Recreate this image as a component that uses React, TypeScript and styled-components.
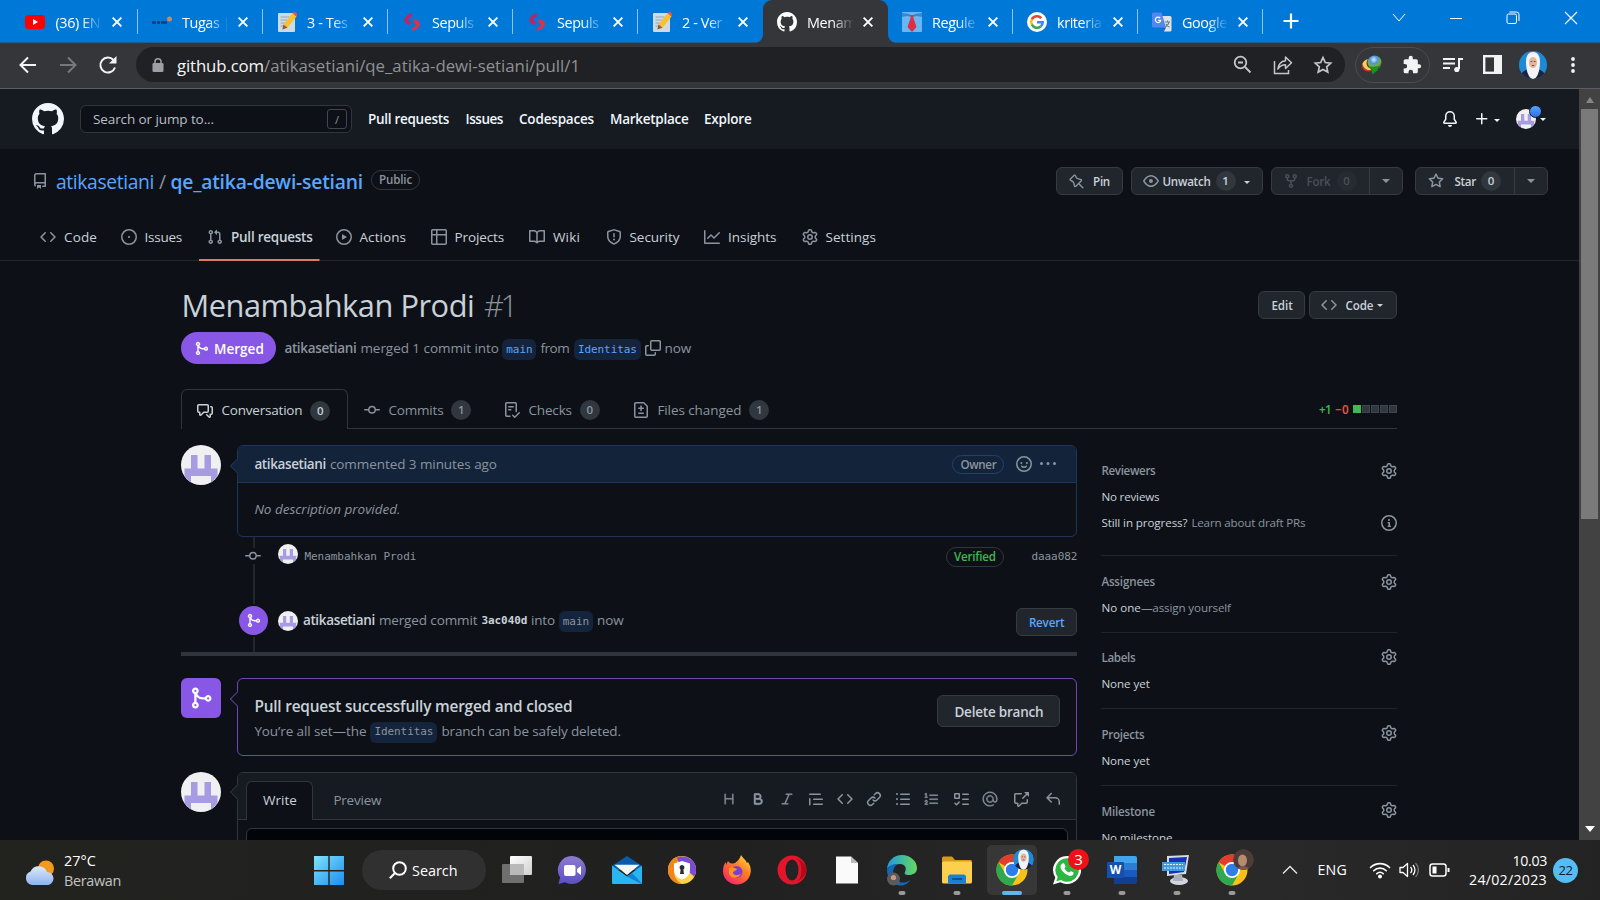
import React, { useLayoutEffect, useRef, useState } from "react";
import styled, { createGlobalStyle, css } from "styled-components";
import { GoHeading, GoBold, GoItalic, GoMention, GoListOrdered } from "react-icons/go";

const GlobalStyle = createGlobalStyle`
  html, body { margin: 0; padding: 0; background: #0d1117; overflow: hidden; }
  * { box-sizing: border-box; }
  body { font-family: "Open Sans", "Noto Sans", sans-serif; }
  svg { display: block; flex: none; }
`;

const c = {
  page: "#0d1117",
  header: "#161b22",
  text: "#c9d1d9",
  muted: "#8b949e",
  border: "#30363d",
  soft: "#21262d",
  link: "#58a6ff",
  purple: "#8957e5",
};

/* ---------- text that is tracked to fill a given width ---------- */

const TextBox = styled.span<{ $w: number; $size: number; $weight: number; $color: string; $ml: number; $drop: number; $mono?: boolean; $italic?: boolean }>`
  flex: none;
  display: inline-block;
  width: ${(p) => p.$w}px;
  margin-left: ${(p) => p.$ml}px;
  padding-top: ${(p) => p.$drop * 2}px;
  font-size: ${(p) => p.$size}px;
  font-weight: ${(p) => p.$weight};
  font-style: ${(p) => (p.$italic ? "italic" : "normal")};
  color: ${(p) => p.$color};
  line-height: 1.3;
  white-space: pre;
  ${(p) => p.$mono && css`font-family: "DejaVu Sans Mono", monospace;`}
`;

type FitProps = {
  w: number;
  size?: number;
  weight?: number;
  color?: string;
  ml?: number;
  drop?: number;
  mono?: boolean;
  italic?: boolean;
  children: string;
};

function Fit({ w, size = 13.5, weight = 400, color = c.text, ml = 0, drop = 1, mono, italic, children }: FitProps) {
  const ref = useRef<HTMLSpanElement>(null);
  const [spacing, setSpacing] = useState<number | null>(null);
  useLayoutEffect(() => {
    if (spacing === null && ref.current) {
      const natural = ref.current.getBoundingClientRect().width;
      setSpacing((w - natural) / children.length);
    }
  }, [spacing, w, children]);
  return (
    <TextBox $w={w} $size={size} $weight={weight} $color={color} $ml={ml} $drop={drop} $mono={mono} $italic={italic}>
      <span ref={ref} style={{ letterSpacing: spacing ?? 0 }}>{children}</span>
    </TextBox>
  );
}

/* ---------- octicons ---------- */

const paths: Record<string, string> = {
  repo: "M2 2.5A2.5 2.5 0 0 1 4.5 0h8.75a.75.75 0 0 1 .75.75v12.5a.75.75 0 0 1-.75.75h-2.5a.75.75 0 0 1 0-1.5h1.75v-2h-8a1 1 0 0 0-.714 1.7.75.75 0 1 1-1.072 1.05A2.495 2.495 0 0 1 2 11.5Zm10.5-1h-8a1 1 0 0 0-1 1v6.708A2.486 2.486 0 0 1 4.5 9h8ZM5 12.25a.25.25 0 0 1 .25-.25h3.5a.25.25 0 0 1 .25.25v3.25a.25.25 0 0 1-.4.2l-1.45-1.087a.249.249 0 0 0-.3 0L5.4 15.7a.25.25 0 0 1-.4-.2Z",
  code: "m11.28 3.22 4.25 4.25a.75.75 0 0 1 0 1.06l-4.25 4.25a.749.749 0 0 1-1.275-.326.749.749 0 0 1 .215-.734L13.94 8l-3.72-3.72a.749.749 0 0 1 .326-1.275.749.749 0 0 1 .734.215Zm-6.56 0a.751.751 0 0 1 1.042.018.751.751 0 0 1 .018 1.042L2.06 8l3.72 3.72a.749.749 0 0 1-.326 1.275.749.749 0 0 1-.734-.215L.47 8.53a.75.75 0 0 1 0-1.06Z",
  issue: "M8 9.1a1.1 1.1 0 1 0 0-2.2 1.1 1.1 0 0 0 0 2.2ZM8 0a8 8 0 1 1 0 16A8 8 0 0 1 8 0ZM1.5 8a6.5 6.5 0 1 0 13 0 6.5 6.5 0 0 0-13 0Z",
  pull: "M1.5 3.25a2.25 2.25 0 1 1 3 2.122v5.256a2.251 2.251 0 1 1-1.5 0V5.372A2.25 2.25 0 0 1 1.5 3.25Zm5.677-.177L9.573.677A.25.25 0 0 1 10 .854V2.5h1A2.5 2.5 0 0 1 13.5 5v5.628a2.251 2.251 0 1 1-1.5 0V5a1 1 0 0 0-1-1h-1v1.646a.25.25 0 0 1-.427.177L7.177 3.427a.25.25 0 0 1 0-.354ZM3.75 2.5a.75.75 0 1 0 0 1.5.75.75 0 0 0 0-1.5Zm0 9.5a.75.75 0 1 0 0 1.5.75.75 0 0 0 0-1.5Zm8.25.75a.75.75 0 1 0 1.5 0 .75.75 0 0 0-1.5 0Z",
  play: "M8 0a8 8 0 1 1 0 16A8 8 0 0 1 8 0ZM1.5 8a6.5 6.5 0 1 0 13 0 6.5 6.5 0 0 0-13 0Zm4.879-2.773 4.264 2.559a.25.25 0 0 1 0 .428l-4.264 2.559A.25.25 0 0 1 6 10.559V5.442a.25.25 0 0 1 .379-.215Z",
  table: "M0 1.75C0 .784.784 0 1.75 0h12.5C15.216 0 16 .784 16 1.75v12.5A1.75 1.75 0 0 1 14.25 16H1.75A1.75 1.75 0 0 1 0 14.25ZM6.5 6.5v8h7.75a.25.25 0 0 0 .25-.25V6.5Zm8-1.5V1.75a.25.25 0 0 0-.25-.25H6.5V5Zm-13 1.5v7.75c0 .138.112.25.25.25H5v-8ZM5 5V1.5H1.75a.25.25 0 0 0-.25.25V5Z",
  book: "M0 1.75A.75.75 0 0 1 .75 1h4.253c1.227 0 2.317.59 3 1.501A3.743 3.743 0 0 1 11.006 1h4.245a.75.75 0 0 1 .75.75v10.5a.75.75 0 0 1-.75.75h-4.507a2.25 2.25 0 0 0-1.591.659l-.622.621a.75.75 0 0 1-1.06 0l-.622-.621A2.25 2.25 0 0 0 5.258 13H.75a.75.75 0 0 1-.75-.75Zm7.251 10.324.004-5.073-.002-2.253A2.25 2.25 0 0 0 5.003 2.5H1.5v9h3.757a3.75 3.75 0 0 1 1.994.574ZM8.755 4.75l-.004 7.322a3.752 3.752 0 0 1 1.992-.572H14.5v-9h-3.495a2.25 2.25 0 0 0-2.25 2.25Z",
  shield: "M7.467.133a1.748 1.748 0 0 1 1.066 0l5.25 1.68A1.75 1.75 0 0 1 15 3.48V7c0 1.566-.32 3.182-1.303 4.682-.983 1.498-2.585 2.813-5.032 3.855a1.697 1.697 0 0 1-1.33 0c-2.447-1.042-4.049-2.357-5.032-3.855C1.32 10.182 1 8.566 1 7V3.48a1.75 1.75 0 0 1 1.217-1.667Zm.61 1.429a.25.25 0 0 0-.153 0l-5.25 1.68a.25.25 0 0 0-.174.238V7c0 1.358.275 2.666 1.057 3.86.784 1.194 2.121 2.34 4.366 3.297a.196.196 0 0 0 .154 0c2.245-.956 3.582-2.104 4.366-3.298C13.225 9.666 13.5 8.36 13.5 7V3.48a.251.251 0 0 0-.174-.237l-5.25-1.68ZM8.75 4.75v3a.75.75 0 0 1-1.5 0v-3a.75.75 0 0 1 1.5 0ZM9 10.5a1 1 0 1 1-2 0 1 1 0 0 1 2 0Z",
  graph: "M1.5 1.75V13.5h13.75a.75.75 0 0 1 0 1.5H.75a.75.75 0 0 1-.75-.75V1.75a.75.75 0 0 1 1.5 0Zm14.28 2.53-5.25 5.25a.75.75 0 0 1-1.06 0L7 7.06 4.28 9.78a.751.751 0 0 1-1.042-.018.751.751 0 0 1-.018-1.042l3.25-3.25a.75.75 0 0 1 1.06 0L10 7.94l4.72-4.72a.751.751 0 0 1 1.042.018.751.751 0 0 1 .018 1.042Z",
  gear: "M8 0a8.2 8.2 0 0 1 .701.031C9.444.095 9.99.645 10.16 1.29l.288 1.107c.018.066.079.158.212.224.231.114.454.243.668.386.123.082.233.09.299.071l1.103-.303c.644-.176 1.392.021 1.82.63.27.385.506.792.704 1.218.315.675.111 1.422-.364 1.891l-.814.806c-.049.048-.098.147-.088.294.016.257.016.515 0 .772-.01.147.038.246.088.294l.814.806c.475.469.679 1.216.364 1.891a7.977 7.977 0 0 1-.704 1.217c-.428.61-1.176.807-1.82.63l-1.102-.302c-.067-.019-.177-.011-.3.071a5.909 5.909 0 0 1-.668.386c-.133.066-.194.158-.211.224l-.29 1.106c-.168.646-.715 1.196-1.458 1.26a8.006 8.006 0 0 1-1.402 0c-.743-.064-1.289-.614-1.458-1.26l-.289-1.106c-.018-.066-.079-.158-.212-.224a5.738 5.738 0 0 1-.668-.386c-.123-.082-.233-.09-.299-.071l-1.103.303c-.644.176-1.392-.021-1.82-.63a8.12 8.12 0 0 1-.704-1.218c-.315-.675-.111-1.422.363-1.891l.815-.806c.05-.048.098-.147.088-.294a6.214 6.214 0 0 1 0-.772c.01-.147-.038-.246-.088-.294l-.815-.806C.635 6.045.431 5.298.746 4.623a7.92 7.92 0 0 1 .704-1.217c.428-.61 1.176-.807 1.82-.63l1.102.302c.067.019.177.011.3-.071.214-.143.437-.272.668-.386.133-.066.194-.158.211-.224l.29-1.106C6.009.645 6.556.095 7.299.03 7.53.01 7.764 0 8 0Zm-.571 1.525c-.036.003-.108.036-.137.146l-.289 1.105c-.147.561-.549.967-.998 1.189-.173.086-.34.183-.5.29-.417.278-.97.423-1.529.27l-1.103-.303c-.109-.03-.175.016-.195.045-.22.312-.412.644-.573.99-.014.031-.021.11.059.19l.815.806c.411.406.562.957.53 1.456a4.709 4.709 0 0 0 0 .582c.032.499-.119 1.05-.53 1.456l-.815.806c-.081.08-.073.159-.059.19.162.346.353.677.573.989.02.03.085.076.195.046l1.102-.303c.56-.153 1.113-.008 1.53.27.161.107.328.204.501.29.447.222.85.629.997 1.189l.289 1.105c.029.109.101.143.137.146a6.6 6.6 0 0 0 1.142 0c.036-.003.108-.036.137-.146l.289-1.105c.147-.561.549-.967.998-1.189.173-.086.34-.183.5-.29.417-.278.97-.423 1.529-.27l1.103.303c.109.029.175-.016.195-.045.22-.313.411-.644.573-.99.014-.031.021-.11-.059-.19l-.815-.806c-.411-.406-.562-.957-.53-1.456a4.709 4.709 0 0 0 0-.582c-.032-.499.119-1.05.53-1.456l.815-.806c.081-.08.073-.159.059-.19a6.464 6.464 0 0 0-.573-.989c-.02-.03-.085-.076-.195-.046l-1.102.303c-.56.153-1.113.008-1.53-.27a4.44 4.44 0 0 0-.501-.29c-.447-.222-.85-.629-.997-1.189l-.289-1.105c-.029-.11-.101-.143-.137-.146a6.6 6.6 0 0 0-1.142 0ZM11 8a3 3 0 1 1-6 0 3 3 0 0 1 6 0ZM9.5 8a1.5 1.5 0 1 0-3.001.001A1.5 1.5 0 0 0 9.5 8Z",
  pin: "m11.294.984 3.722 3.722a1.75 1.75 0 0 1-.504 2.826l-1.327.613a3.089 3.089 0 0 0-1.707 2.084l-.584 2.454c-.317 1.332-1.972 1.8-2.94.832L5.75 11.311 1.78 15.28a.749.749 0 1 1-1.06-1.06l3.969-3.97-2.204-2.204c-.968-.968-.5-2.623.832-2.94l2.454-.584a3.08 3.08 0 0 0 2.084-1.707l.613-1.327a1.75 1.75 0 0 1 2.826-.504ZM6.283 9.723l2.732 2.731a.25.25 0 0 0 .42-.119l.584-2.454a4.586 4.586 0 0 1 2.537-3.098l1.328-.613a.25.25 0 0 0 .072-.404l-3.722-3.722a.25.25 0 0 0-.404.072l-.613 1.328a4.584 4.584 0 0 1-3.098 2.537l-2.454.584a.25.25 0 0 0-.119.42l2.731 2.732Z",
  eye: "M8 2c1.981 0 3.671.992 4.933 2.078 1.27 1.091 2.187 2.345 2.637 3.023a1.62 1.62 0 0 1 0 1.798c-.45.678-1.367 1.932-2.637 3.023C11.67 13.008 9.981 14 8 14c-1.981 0-3.671-.992-4.933-2.078C1.797 10.83.88 9.576.43 8.898a1.62 1.62 0 0 1 0-1.798c.45-.677 1.367-1.931 2.637-3.022C4.33 2.992 6.019 2 8 2ZM1.679 7.932a.12.12 0 0 0 0 .136c.411.622 1.241 1.75 2.366 2.717C5.176 11.758 6.527 12.5 8 12.5c1.473 0 2.825-.742 3.955-1.715 1.124-.967 1.954-2.096 2.366-2.717a.12.12 0 0 0 0-.136c-.412-.621-1.242-1.75-2.366-2.717C10.824 4.242 9.473 3.5 8 3.5c-1.473 0-2.825.742-3.955 1.715-1.124.967-1.954 2.096-2.366 2.717ZM8 10a2 2 0 1 1-.001-3.999A2 2 0 0 1 8 10Z",
  fork: "M5 5.372v.878c0 .414.336.75.75.75h4.5a.75.75 0 0 0 .75-.75v-.878a2.25 2.25 0 1 1 1.5 0v.878a2.25 2.25 0 0 1-2.25 2.25h-1.5v2.128a2.251 2.251 0 1 1-1.5 0V8.5h-1.5A2.25 2.25 0 0 1 3.5 6.25v-.878a2.25 2.25 0 1 1 1.5 0ZM5 3.25a.75.75 0 1 0-1.5 0 .75.75 0 0 0 1.5 0Zm6.75.75a.75.75 0 1 0 0-1.5.75.75 0 0 0 0 1.5Zm-3 8.75a.75.75 0 1 0-1.5 0 .75.75 0 0 0 1.5 0Z",
  star: "M8 .25a.75.75 0 0 1 .673.418l1.882 3.815 4.21.612a.75.75 0 0 1 .416 1.279l-3.046 2.97.719 4.192a.751.751 0 0 1-1.088.791L8 12.347l-3.766 1.98a.75.75 0 0 1-1.088-.79l.72-4.194L.818 6.374a.75.75 0 0 1 .416-1.28l4.21-.611L7.327.668A.75.75 0 0 1 8 .25Zm0 2.445L6.615 5.5a.75.75 0 0 1-.564.41l-3.097.45 2.24 2.184a.75.75 0 0 1 .216.664l-.528 3.084 2.769-1.456a.75.75 0 0 1 .698 0l2.77 1.456-.53-3.084a.75.75 0 0 1 .216-.664l2.24-2.183-3.096-.45a.75.75 0 0 1-.564-.41L8 2.694Z",
  merge: "M5.45 5.154A4.25 4.25 0 0 0 9.25 7.5h1.378a2.251 2.251 0 1 1 0 1.5H9.25A5.734 5.734 0 0 1 5 7.123v3.505a2.25 2.25 0 1 1-1.5 0V5.372a2.25 2.25 0 1 1 1.95-.218ZM4.25 13.5a.75.75 0 1 0 0-1.5.75.75 0 0 0 0 1.5Zm8.5-4.5a.75.75 0 1 0 0-1.5.75.75 0 0 0 0 1.5ZM5 3.25a.75.75 0 1 0 0 .005V3.25Z",
  copy: "M5 1.75C5 .784 5.784 0 6.75 0h7.5C15.216 0 16 .784 16 1.75v7.5A1.75 1.75 0 0 1 14.25 11h-7.5A1.75 1.75 0 0 1 5 9.25Zm1.75-.25a.25.25 0 0 0-.25.25v7.5c0 .138.112.25.25.25h7.5a.25.25 0 0 0 .25-.25v-7.5a.25.25 0 0 0-.25-.25ZM0 6.75C0 5.784.784 5 1.75 5h1.5a.75.75 0 0 1 0 1.5h-1.5a.25.25 0 0 0-.25.25v7.5c0 .138.112.25.25.25h7.5a.25.25 0 0 0 .25-.25v-1.5a.75.75 0 0 1 1.5 0v1.5A1.75 1.75 0 0 1 9.25 16h-7.5A1.75 1.75 0 0 1 0 14.25Z",
  discussion: "M1.75 1h8.5c.966 0 1.75.784 1.75 1.75v5.5A1.75 1.75 0 0 1 10.25 10H7.061l-2.574 2.573A1.458 1.458 0 0 1 2 11.543V10h-.25A1.75 1.75 0 0 1 0 8.25v-5.5C0 1.784.784 1 1.75 1ZM1.5 2.75v5.5c0 .138.112.25.25.25h1a.75.75 0 0 1 .75.75v2.19l2.72-2.72a.749.749 0 0 1 .53-.22h3.5a.25.25 0 0 0 .25-.25v-5.5a.25.25 0 0 0-.25-.25h-8.5a.25.25 0 0 0-.25.25Zm13 2a.25.25 0 0 0-.25-.25h-.5a.75.75 0 0 1 0-1.5h.5c.966 0 1.75.784 1.75 1.75v5.5A1.75 1.75 0 0 1 14.25 12H14v1.543a1.458 1.458 0 0 1-2.487 1.03L9.22 12.28a.749.749 0 0 1 .326-1.275.749.749 0 0 1 .734.215l2.22 2.22v-2.19a.75.75 0 0 1 .75-.75h1a.25.25 0 0 0 .25-.25Z",
  commit: "M11.93 8.5a4.002 4.002 0 0 1-7.86 0H.75a.75.75 0 0 1 0-1.5h3.32a4.002 4.002 0 0 1 7.86 0h3.32a.75.75 0 0 1 0 1.5Zm-1.43-.75a2.5 2.5 0 1 0-5 0 2.5 2.5 0 0 0 5 0Z",
  checklist: "M2.5 1.75v11.5c0 .138.112.25.25.25h3.17a.75.75 0 0 1 0 1.5H2.75A1.75 1.75 0 0 1 1 13.25V1.75C1 .784 1.784 0 2.75 0h8.5C12.216 0 13 .784 13 1.75v7.736a.75.75 0 0 1-1.5 0V1.75a.25.25 0 0 0-.25-.25h-8.5a.25.25 0 0 0-.25.25Zm13.274 9.537v-.001l-4.557 4.45a.75.75 0 0 1-1.055-.008l-1.943-1.95a.75.75 0 0 1 1.062-1.058l1.419 1.425 4.026-3.932a.75.75 0 1 1 1.048 1.074ZM4.75 4h4.5a.75.75 0 0 1 0 1.5h-4.5a.75.75 0 0 1 0-1.5ZM4 7.75A.75.75 0 0 1 4.75 7h2a.75.75 0 0 1 0 1.5h-2A.75.75 0 0 1 4 7.75Z",
  filediff: "M1 1.75C1 .784 1.784 0 2.75 0h7.586c.464 0 .909.184 1.237.513l2.914 2.914c.329.328.513.773.513 1.237v9.586A1.75 1.75 0 0 1 13.25 16H2.75A1.75 1.75 0 0 1 1 14.25Zm1.75-.25a.25.25 0 0 0-.25.25v12.5c0 .138.112.25.25.25h10.5a.25.25 0 0 0 .25-.25V4.664a.25.25 0 0 0-.073-.177l-2.914-2.914a.25.25 0 0 0-.177-.073ZM8 3.25a.75.75 0 0 1 .75.75v1.5h1.5a.75.75 0 0 1 0 1.5h-1.5v1.5a.75.75 0 0 1-1.5 0V7h-1.5a.75.75 0 0 1 0-1.5h1.5V4A.75.75 0 0 1 8 3.25Zm-3 8a.75.75 0 0 1 .75-.75h4.5a.75.75 0 0 1 0 1.5h-4.5a.75.75 0 0 1-.75-.75Z",
  kebab: "M8 9a1.5 1.5 0 1 0 0-3 1.5 1.5 0 0 0 0 3ZM1.5 9a1.5 1.5 0 1 0 0-3 1.5 1.5 0 0 0 0 3Zm13 0a1.5 1.5 0 1 0 0-3 1.5 1.5 0 0 0 0 3Z",
  info: "M0 8a8 8 0 1 1 16 0A8 8 0 0 1 0 8Zm8-6.5a6.5 6.5 0 1 0 0 13 6.5 6.5 0 0 0 0-13ZM6.5 7.75A.75.75 0 0 1 7.25 7h1a.75.75 0 0 1 .75.75v2.75h.25a.75.75 0 0 1 0 1.5h-2a.75.75 0 0 1 0-1.5h.25v-2h-.25a.75.75 0 0 1-.75-.75ZM8 6a1 1 0 1 1 0-2 1 1 0 0 1 0 2Z",
  quote: "M1.75 2.5h10.5a.75.75 0 0 1 0 1.5H1.75a.75.75 0 0 1 0-1.5Zm4 5h8.5a.75.75 0 0 1 0 1.5h-8.5a.75.75 0 0 1 0-1.5Zm0 5h8.5a.75.75 0 0 1 0 1.5h-8.5a.75.75 0 0 1 0-1.5ZM2.5 7.75v6a.75.75 0 0 1-1.5 0v-6a.75.75 0 0 1 1.5 0Z",
  link: "m7.775 3.275 1.25-1.25a3.5 3.5 0 1 1 4.95 4.95l-2.5 2.5a3.5 3.5 0 0 1-4.95 0 .751.751 0 0 1 .018-1.042.751.751 0 0 1 1.042-.018 1.998 1.998 0 0 0 2.83 0l2.5-2.5a2.002 2.002 0 0 0-2.83-2.83l-1.25 1.25a.751.751 0 0 1-1.042-.018.751.751 0 0 1-.018-1.042Zm-4.69 9.64a1.998 1.998 0 0 0 2.83 0l1.25-1.25a.751.751 0 0 1 1.042.018.751.751 0 0 1 .018 1.042l-1.25 1.25a3.5 3.5 0 1 1-4.95-4.95l2.5-2.5a3.5 3.5 0 0 1 4.95 0 .751.751 0 0 1-.018 1.042.751.751 0 0 1-1.042.018 1.998 1.998 0 0 0-2.83 0l-2.5 2.5a1.998 1.998 0 0 0 0 2.83Z",
  ul: "M5.75 2.5h8.5a.75.75 0 0 1 0 1.5h-8.5a.75.75 0 0 1 0-1.5Zm0 5h8.5a.75.75 0 0 1 0 1.5h-8.5a.75.75 0 0 1 0-1.5Zm0 5h8.5a.75.75 0 0 1 0 1.5h-8.5a.75.75 0 0 1 0-1.5ZM2 14a1 1 0 1 1 0-2 1 1 0 0 1 0 2Zm1-6a1 1 0 1 1-2 0 1 1 0 0 1 2 0ZM2 4a1 1 0 1 1 0-2 1 1 0 0 1 0 2Z",
  tasks: "M2 2h4a1 1 0 0 1 1 1v4a1 1 0 0 1-1 1H2a1 1 0 0 1-1-1V3a1 1 0 0 1 1-1Zm4.655 8.595a.75.75 0 0 1 0 1.06L4.03 14.28a.75.75 0 0 1-1.06 0l-1.5-1.5a.749.749 0 0 1 .326-1.275.749.749 0 0 1 .734.215l.97.97 2.095-2.095a.75.75 0 0 1 1.06 0ZM9.75 2.5h5.5a.75.75 0 0 1 0 1.5h-5.5a.75.75 0 0 1 0-1.5Zm0 5h5.5a.75.75 0 0 1 0 1.5h-5.5a.75.75 0 0 1 0-1.5Zm0 5h5.5a.75.75 0 0 1 0 1.5h-5.5a.75.75 0 0 1 0-1.5Zm-7.25-9v3h3v-3Z",
  reply: "M6.78 1.97a.75.75 0 0 1 0 1.06L3.81 6h6.44A4.75 4.75 0 0 1 15 10.75v2.5a.75.75 0 0 1-1.5 0v-2.5a3.25 3.25 0 0 0-3.25-3.25H3.81l2.97 2.97a.749.749 0 0 1-.326 1.275.749.749 0 0 1-.734-.215L1.47 7.28a.75.75 0 0 1 0-1.06l4.25-4.25a.75.75 0 0 1 1.06 0Z",
  crossref: "M2.75 3.5a.25.25 0 0 0-.25.25v7.5c0 .138.112.25.25.25h2a.75.75 0 0 1 .75.75v2.19l2.72-2.72a.749.749 0 0 1 .53-.22h4.5a.25.25 0 0 0 .25-.25v-2.5a.75.75 0 0 1 1.5 0v2.5A1.75 1.75 0 0 1 13.25 13H9.06l-2.573 2.573A1.458 1.458 0 0 1 4 14.543V13H2.75A1.75 1.75 0 0 1 1 11.25v-7.5C1 2.784 1.784 2 2.75 2h5.5a.75.75 0 0 1 0 1.5ZM16 1.25v4.146a.25.25 0 0 1-.427.177L14.03 4.03l-3.75 3.75a.749.749 0 0 1-1.275-.326.749.749 0 0 1 .215-.734l3.75-3.75-1.543-1.543A.25.25 0 0 1 11.604 1h4.146a.25.25 0 0 1 .25.25Z",
  bell: "M8 16a2 2 0 0 0 1.985-1.75c.017-.137-.097-.25-.235-.25h-3.5c-.138 0-.252.113-.235.25A2 2 0 0 0 8 16ZM3 5a5 5 0 0 1 10 0v2.947c0 .05.015.098.042.139l1.703 2.555A1.519 1.519 0 0 1 13.482 13H2.518a1.516 1.516 0 0 1-1.263-2.36l1.703-2.554A.255.255 0 0 0 3 7.947Zm5-3.5A3.5 3.5 0 0 0 4.5 5v2.947c0 .346-.102.683-.294.97l-1.703 2.556a.017.017 0 0 0-.003.01l.001.006c0 .002.002.004.004.006l.006.004.007.001h10.964l.007-.001.006-.004.004-.006.001-.007a.017.017 0 0 0-.003-.01l-1.703-2.554a1.745 1.745 0 0 1-.294-.97V5A3.5 3.5 0 0 0 8 1.5Z",
  plus: "M7.75 2a.75.75 0 0 1 .75.75V7h4.25a.75.75 0 0 1 0 1.5H8.5v4.25a.75.75 0 0 1-1.5 0V8.5H2.75a.75.75 0 0 1 0-1.5H7V2.75A.75.75 0 0 1 7.75 2Z",
  mark: "M8 0c4.42 0 8 3.58 8 8a8.013 8.013 0 0 1-5.45 7.59c-.4.08-.55-.17-.55-.38 0-.27.01-1.13.01-2.2 0-.75-.25-1.23-.54-1.48 1.78-.2 3.65-.88 3.65-3.95 0-.88-.31-1.59-.82-2.15.08-.2.36-1.02-.08-2.12 0 0-.67-.22-2.2.82-.64-.18-1.32-.27-2-.27-.68 0-1.36.09-2 .27-1.53-1.03-2.2-.82-2.2-.82-.44 1.1-.16 1.92-.08 2.12-.51.56-.82 1.28-.82 2.15 0 3.06 1.86 3.75 3.64 3.95-.23.2-.44.55-.51 1.07-.46.21-1.61.55-2.33-.66-.15-.24-.6-.83-1.23-.82-.67.01-.27.38.01.53.34.19.73.9.82 1.13.16.45.68 1.31 2.69.94 0 .67.01 1.3.01 1.49 0 .21-.15.45-.55.38A7.995 7.995 0 0 1 0 8c0-4.42 3.58-8 8-8Z",
};

const IconSvg = styled.svg<{ $ml: number; $color: string; $flip?: boolean }>`
  margin-left: ${(p) => p.$ml}px;
  fill: ${(p) => p.$color};
  ${(p) => p.$flip && css`transform: scaleX(-1);`}
`;

function Oct({ n, size = 16, ml = 0, color = c.muted, flip }: { n: string; size?: number; ml?: number; color?: string; flip?: boolean }) {
  return (
    <IconSvg $ml={ml} $color={color} $flip={flip} width={size} height={size} viewBox="0 0 16 16">
      <path fillRule="evenodd" d={paths[n]} />
    </IconSvg>
  );
}

function Smiley({ ml = 0 }: { ml?: number }) {
  return (
    <IconSvg $ml={ml} $color="none" width="16" height="16" viewBox="0 0 16 16" stroke={c.muted} strokeWidth="1.5" strokeLinecap="round">
      <circle cx="8" cy="8" r="7.25" />
      <path d="M5.7 10.2c1.1 1.4 3.5 1.4 4.6 0" />
      <circle cx="5.2" cy="7" r=".5" strokeWidth="1" fill={c.muted} />
      <circle cx="10.8" cy="7" r=".5" strokeWidth="1" fill={c.muted} />
    </IconSvg>
  );
}

const Caret = styled.span<{ $ml?: number; $mt?: number; $s?: number; $color?: string }>`
  flex: none;
  width: 0;
  height: 0;
  margin-left: ${(p) => p.$ml ?? 0}px;
  margin-top: ${(p) => p.$mt ?? 0}px;
  border: ${(p) => p.$s ?? 4}px solid transparent;
  border-bottom: 0;
  border-top-color: ${(p) => p.$color ?? c.text};
`;

const AvatarSvg = styled.svg<{ $ml: number; $lift: number }>`
  margin-left: ${(p) => p.$ml}px;
  margin-bottom: ${(p) => p.$lift * 2}px;
  border-radius: 50%;
  background: #f0f0f2;
`;

function Avatar({ size, ml = 0, lift = 0 }: { size: number; ml?: number; lift?: number }) {
  return (
    <AvatarSvg $ml={ml} $lift={lift} width={size} height={size} viewBox="0 0 40 40">
      <path fill="#a79be2" d="M10 10h6.5v13.5h7V10H30v13.5h6.5v7L31 37.5h-1V31H10v6.5H9L3.5 31v-7.5H10z" />
    </AvatarSvg>
  );
}

/* ---------- browser chrome ---------- */

const Screen = styled.div`
  width: 1600px;
  height: 900px;
  display: flex;
  flex-direction: column;
  overflow: hidden;
  background: ${c.page};
`;

const TabStrip = styled.div`
  flex: none;
  height: 43px;
  display: flex;
  align-items: stretch;
  padding-left: 13px;
  background: #0078d7;
  border-bottom: 1px solid #1d5e93;
`;

const BrowserTab = styled.div<{ $active?: boolean; $bar?: boolean }>`
  flex: none;
  position: relative;
  width: 125px;
  display: flex;
  align-items: center;
  padding-left: 13.5px;
  height: 43px;
  &:first-child { padding-left: 12px; }
  ${(p) =>
    p.$active &&
    css`
      background: #35363a;
      border-radius: 9px 9px 0 0;
      &::before, &::after {
        content: "";
        position: absolute;
        bottom: 0;
        width: 8px;
        height: 8px;
      }
      &::before { left: -8px; background: radial-gradient(circle at 0 0, transparent 7.5px, #35363a 8px); }
      &::after { right: -8px; background: radial-gradient(circle at 8px 0, transparent 7.5px, #35363a 8px); }
    `}
  ${(p) =>
    p.$bar &&
    css`
      background: linear-gradient(#8fc3ef, #8fc3ef) 124px 9px / 1px 25px no-repeat;
    `}
`;

const TabTitle = styled.span`
  flex: none;
  width: 47px;
  margin-left: 10.5px;
  padding-top: 1px;
  white-space: nowrap;
  font-size: 14.4px;
  letter-spacing: -0.4px;
  color: #fff;
  mask-image: linear-gradient(90deg, #000 25px, transparent 47px);
`;

function CloseX() {
  return (
    <IconSvg $ml={9} $color="none" width="10" height="10" viewBox="0 0 10 10" stroke="#fff" strokeWidth="1.9">
      <path d="M.6.6l8.8 8.8M9.4.6L.6 9.4" />
    </IconSvg>
  );
}

const FavIcon = ({ kind }: { kind: string }) => {
  switch (kind) {
    case "yt":
      return (
        <svg width="20" height="20" viewBox="0 0 20 20">
          <rect x="0" y="3" width="20" height="14" rx="3.5" fill="#f00" />
          <path d="M8 7v6l5-3z" fill="#fff" />
        </svg>
      );
    case "alterra":
      return (
        <svg width="20" height="20" viewBox="0 0 20 20">
          <path d="M0 10.5h4M5 10.5h3M9 10.5h6" stroke="#0b3f7c" strokeWidth="2.6" />
          <circle cx="17.5" cy="7" r="2.5" fill="#c98a62" />
        </svg>
      );
    case "note":
      return (
        <svg width="20" height="20" viewBox="0 0 20 20">
          <rect x="1" y="1" width="17" height="19" rx="1" fill="#cfdbe4" />
          <path d="M3.5 5h9M3.5 8h7M3.5 11h5M3.5 14h4" stroke="#90a8b8" strokeWidth="1" />
          <path d="M15.5 1.2l4 3.2-9 11.3-4-3.2z" fill="#fbc02d" />
          <path d="M15.5 1.2l4 3.2 1-1.3c.6-.9-2.9-3.9-3.8-3.3z" fill="#e2574c" />
          <path d="M6.5 12.5l4 3.2-5.2 1.8z" fill="#8d5a3a" />
        </svg>
      );
    case "sepulsa":
      return (
        <svg width="20" height="20" viewBox="0 0 20 20">
          <path d="M9.8 1C6 2.500 2.500 4.500 2.500 8c0 3 2.500 4.300 5.500 5l1-3.200C7.500 9.500 6.300 8.700 6.500 7.300 6.700 5.800 8.500 5 9.800 4.500z" fill="#bf2362" />
          <path d="M12 7l-1 3.200c2 .4 2.800 1.300 2.600 2.700-.2 1.500-2 2.400-3.600 2.900V19c4-1.200 8-3.500 8-7 0-3-2.800-4.300-6-5z" fill="#d3344f" />
        </svg>
      );
    case "github":
      return <Oct n="mark" size={20} color="#fff" />;
    case "tie":
      return (
        <svg width="20" height="20" viewBox="0 0 20 20">
          <rect width="20" height="20" rx="1" fill="#68b7f3" />
          <path d="M0 1l7 1 3 2 3-2 7-1v4l-5-1-5 1-5-1-5 1z" fill="#3b88c9" />
          <path d="M8.3 3h3.4l-.5 2.5L14.5 15 10 20l-4.500-5 3.300-9.500z" fill="#dd2e44" />
        </svg>
      );
    case "google":
      return (
        <svg width="20" height="20" viewBox="0 0 20 20" fill="none" strokeWidth="2.5">
          <circle cx="10" cy="10" r="10" fill="#fff" />
          <path d="M14.3 6.2A5.8 5.8 0 0 0 4.8 7.500" stroke="#ea4335" />
          <path d="M4.8 7.500a5.8 5.8 0 0 0 0 5" stroke="#fbbc05" />
          <path d="M4.8 12.5a5.8 5.8 0 0 0 8.9 2" stroke="#34a853" />
          <path d="M13.7 14.5a5.8 5.8 0 0 0 2-4.300H10" stroke="#4285f4" />
        </svg>
      );
    default:
      return (
        <svg width="20" height="20" viewBox="0 0 20 20">
          <path d="M9 4h9a1.500 1.500 0 0 1 1.500 1.500V18A1.500 1.500 0 0 1 18 19.500h-6z" fill="#dfe3e6" />
          <path d="M13 10h5M15.5 8.500V10M17 10c-.5 2.500-2 4-4 5M14 12c.8 1.500 2 2.500 3.500 3" stroke="#5f7f8c" strokeWidth="1.1" fill="none" />
          <path d="M1.500.5h8L14 15.500H1.500A1.500 1.500 0 0 1 0 14V2A1.500 1.500 0 0 1 1.500.5z" fill="#5187f0" />
          <path d="M10.5 15.500H14l-2 3.800z" fill="#2b50b8" />
          <path d="M8.2 6.200A2.700 2.700 0 1 0 8.700 8.300H6.200" stroke="#fff" strokeWidth="1.2" fill="none" />
        </svg>
      );
  }
};

const tabs = [
  { k: "yt", t: "(36) EN", bar: true },
  { k: "alterra", t: "Tugas |", bar: true },
  { k: "note", t: "3 - Tes", bar: true },
  { k: "sepulsa", t: "Sepuls", bar: true },
  { k: "sepulsa", t: "Sepuls", bar: true },
  { k: "note", t: "2 - Ver" },
  { k: "github", t: "Menam", active: true },
  { k: "tie", t: "Regule", bar: true },
  { k: "google", t: "kriteria", bar: true },
  { k: "trans", t: "Google", bar: true },
];

const WindowControls = styled.div`
  margin-left: auto;
  width: 230px;
  height: 36px;
  display: grid;
  grid-template-columns: repeat(4, 57.4px);
  place-items: center;
`;

const NewTab = styled.div`
  width: 56px;
  display: grid;
  place-items: center;
`;

const Toolbar = styled.div`
  flex: none;
  height: 46px;
  display: flex;
  align-items: center;
  padding-bottom: 2px;
  background: #35363a;
  border-bottom: 1.5px solid #5b5e63;
  svg { fill: none; }
`;

const Omnibox = styled.div`
  flex: none;
  width: 1209px;
  height: 35px;
  margin-left: 18px;
  display: flex;
  align-items: center;
  border-radius: 18px;
  background: #202124;
`;

const ExtensionPill = styled.div`
  flex: none;
  width: 75px;
  height: 36px;
  margin-left: 10px;
  display: flex;
  align-items: center;
  border: 1.5px solid #4b4c50;
  border-radius: 18px;
`;

const NavGlyph = styled.svg<{ $ml: number }>`
  margin-left: ${(p) => p.$ml}px;
`;

const PortraitSlot = styled.span`
  margin-left: 17px;
`;

function Portrait({ size }: { size: number }) {
  return (
    <svg width={size} height={size} viewBox="0 0 28 28">
      <clipPath id={"pc" + size}><circle cx="14" cy="14" r="14" /></clipPath>
      <g clipPath={`url(#pc${size})`}>
        <rect width="28" height="28" fill="#1d8ad6" />
        <path d="M1 28c0-6 4-9 9-10h8c5 1 9 4 9 10z" fill="#1b2440" />
        <path d="M14 1c5 0 7 4.500 7 10 0 8-2.500 17-7 17S7 19 7 11C7 5.500 9 1 14 1z" fill="#f3f3f5" />
        <ellipse cx="14" cy="11.5" rx="4" ry="5.5" fill="#e2b69c" />
        <path d="M11.500 10.500h1.800M14.800 10.500h1.800M12.800 14.500h2.400" stroke="#6b4335" strokeWidth=".9" />
      </g>
    </svg>
  );
}

function BrowserChrome() {
  return (
    <>
      <TabStrip>
        {tabs.map((t, i) => (
          <BrowserTab key={i} $active={t.active} $bar={t.bar}>
            <FavIcon kind={t.k} />
            <TabTitle>{t.t}</TabTitle>
            <CloseX />
          </BrowserTab>
        ))}
        <NewTab>
          <svg width="16" height="16" viewBox="0 0 16 16" stroke="#fff" strokeWidth="2.2"><path d="M8 .5v15M.5 8h15" /></svg>
        </NewTab>
        <WindowControls>
          <svg width="14" height="14" viewBox="0 0 14 14" fill="none" stroke="#fff" strokeWidth="1"><path d="M1 3l6 7 6-7" /></svg>
          <svg width="14" height="14" viewBox="0 0 14 14" stroke="#fff" strokeWidth="1"><path d="M1 7.500h12" /></svg>
          <svg width="14" height="14" viewBox="0 0 14 14" fill="none" stroke="#fff" strokeWidth="1"><rect x="1" y="3" width="9.5" height="9.5" rx="1.5" /><path d="M3.500 1h7A2.500 2.500 0 0 1 13 3.500V10" /></svg>
          <svg width="14" height="14" viewBox="0 0 14 14" stroke="#fff" strokeWidth="1.1"><path d="M1 1l12 12M13 1L1 13" /></svg>
        </WindowControls>
      </TabStrip>
      <Toolbar>
        <NavGlyph $ml={18} width="20" height="20" viewBox="0 0 20 20" stroke="#f1f3f4" strokeWidth="2"><path d="M18 10H3M10 2.500L2.500 10l7.500 7.500" /></NavGlyph>
        <NavGlyph $ml={20} width="20" height="20" viewBox="0 0 20 20" stroke="#77797d" strokeWidth="2"><path d="M2 10h15M10 2.500l7.500 7.500-7.500 7.500" /></NavGlyph>
        <NavGlyph $ml={20} width="20" height="20" viewBox="0 0 20 20" stroke="#f1f3f4" strokeWidth="2"><path d="M17 12.500A7.500 7.500 0 1 1 15.500 5" /><path d="M18.500 1v7.500H11z" fill="#f1f3f4" stroke="none" /></NavGlyph>
        <Omnibox>
          <NavGlyph $ml={15.5} width="12" height="14" viewBox="0 0 12 14"><rect x="0.5" y="5" width="11" height="9" rx="1.3" fill="#9aa0a6" /><path d="M3 5.500V3.800a3 3 0 0 1 6 0v1.700" stroke="#9aa0a6" strokeWidth="1.5" /></NavGlyph>
          <Fit ml={13.5} w={87} size={16.8} color="#f4f5f6">github.com</Fit>
          <Fit w={316} size={16.8} color="#8f9296">/atikasetiani/qe_atika-dewi-setiani/pull/1</Fit>
          <NavGlyph $ml={653} width="19" height="19" viewBox="0 0 19 19" stroke="#c4c7ca" strokeWidth="1.8"><circle cx="7.5" cy="7.5" r="5.8" /><path d="M12 12l5.500 5.500M5 7.500h5" /></NavGlyph>
          <NavGlyph $ml={21} width="20" height="20" viewBox="0 0 20 20" stroke="#c4c7ca" strokeWidth="1.5"><path d="M1.500 6v12.500h14V15" /><path d="M12.500 2v3.700C8 6.200 5.500 9 4.800 14c2-3 4.200-4.200 7.700-4.200v3.700L18.500 7.700z" strokeLinejoin="round" /></NavGlyph>
          <NavGlyph $ml={20} width="20" height="20" viewBox="0 0 20 20" stroke="#c4c7ca" strokeWidth="1.7"><path d="M10 2.500l2.300 5 5.400.6-4 3.700 1.100 5.300L10 14.400l-4.800 2.700 1.100-5.300-4-3.700 5.400-.6z" /></NavGlyph>
        </Omnibox>
        <ExtensionPill>
          <NavGlyph $ml={5} width="22" height="20" viewBox="0 0 22 20">
            <defs>
              <radialGradient id="globe" cx=".45" cy=".3" r=".8"><stop offset="0" stopColor="#d8efff" /><stop offset=".35" stopColor="#4a94d8" /><stop offset=".6" stopColor="#7fae3a" /><stop offset="1" stopColor="#15396b" /></radialGradient>
            </defs>
            <circle cx="13.5" cy="7.5" r="7" fill="url(#globe)" />
            <path d="M1 11c0-4 3-6.500 6-7-1.500 2-2 4-1 6 1.500 3 4 3.500 6 3l-2 3C5.500 17.500 1.500 15 1 11z" fill="#d5352b" />
            <path d="M1.500 9c1-3 3-4.500 5.300-4.800C5.500 6 5 8 6 10.500c1 2.500 3 3.200 5 3L9.500 15C6 15.500 2.500 13 1.500 9z" fill="#f0d35a" />
            <path d="M8 12l12-1-3.500 3 .5 1-5.500 4.500-1-4z" fill="#16941b" />
          </NavGlyph>
          <NavGlyph $ml={19} width="20" height="20" viewBox="0 0 24 24"><path fill="#f1f3f4" d="M20.500 11H19V7a2 2 0 0 0-2-2h-4V3.500a2.500 2.500 0 0 0-5 0V5H4a2 2 0 0 0-2 2v3.800h1.500a2.700 2.700 0 0 1 0 5.400H2V20a2 2 0 0 0 2 2h3.800v-1.500a2.700 2.700 0 0 1 5.400 0V22H17a2 2 0 0 0 2-2v-4h1.500a2.500 2.500 0 0 0 0-5z" /></NavGlyph>
        </ExtensionPill>
        <NavGlyph $ml={13} width="20" height="18" viewBox="0 0 20 18" stroke="#f1f3f4" strokeWidth="2"><path d="M0 3h12M0 7.500h12M0 12h7M16 13V3h4" /><circle cx="13.8" cy="13.5" r="2.6" fill="#f1f3f4" stroke="none" /></NavGlyph>
        <NavGlyph $ml={20} width="19" height="19" viewBox="0 0 19 19"><rect x="1.2" y="1.2" width="16.6" height="16.6" stroke="#f1f3f4" strokeWidth="2.4" /><rect x="11" y="1" width="7" height="17" fill="#f1f3f4" /></NavGlyph>
        <PortraitSlot><Portrait size={28} /></PortraitSlot>
        <NavGlyph $ml={23} width="6" height="18" viewBox="0 0 6 18"><g fill="#f1f3f4"><circle cx="3" cy="3" r="1.9" /><circle cx="3" cy="9" r="1.9" /><circle cx="3" cy="15" r="1.9" /></g></NavGlyph>
      </Toolbar>
    </>
  );
}

/* ---------- page frame ---------- */

const Viewport = styled.div`
  flex: none;
  height: 751px;
  display: flex;
  overflow: hidden;
`;

const Page = styled.div`
  width: 1579px;
  height: 751px;
  overflow: hidden;
`;

const Scrollbar = styled.div`
  width: 21px;
  display: flex;
  flex-direction: column;
  align-items: center;
  background: #424242;
`;

const Thumb = styled.div`
  width: 17px;
  height: 410px;
  margin: 6px 0 307px;
  background: #7a7a7a;
`;

const UpArrow = styled.div`
  margin-top: 8px;
  border: 4.5px solid transparent;
  border-top: 0;
  border-bottom: 6px solid #858585;
`;

const DownArrow = styled.div`
  border: 5px solid transparent;
  border-bottom: 0;
  border-top: 6px solid #fff;
`;

const SiteHeader = styled.header`
  height: 60px;
  display: flex;
  align-items: center;
  padding-left: 32px;
  background: ${c.header};
`;

const SearchBox = styled.div`
  width: 272px;
  height: 28px;
  margin-left: 16px;
  display: flex;
  align-items: center;
  padding-left: 12px;
  background: ${c.page};
  border: 1px solid ${c.border};
  border-radius: 6px;
`;

const SlashKey = styled.span`
  width: 20px;
  height: 20px;
  margin-left: auto;
  margin-right: 4px;
  display: grid;
  place-items: center;
  border: 1px solid #41474f;
  border-radius: 3px;
  font-size: 11px;
  color: ${c.muted};
`;

const HeaderAvatar = styled.span`
  position: relative;
  margin-left: 16px;
  &::after {
    content: "";
    position: absolute;
    top: -4px;
    right: -6px;
    width: 11px;
    height: 11px;
    border-radius: 50%;
    background: linear-gradient(#54a3ff, #306ee8);
    border: 1px solid ${c.header};
    box-sizing: content-box;
  }
`;

const RepoTop = styled.div`
  height: 64px;
  display: flex;
  align-items: center;
  padding-left: 32px;
`;

const Pill = styled.span<{ $w: number; $h: number; $ml: number; $bc?: string; $mb?: number }>`
  flex: none;
  width: ${(p) => p.$w}px;
  height: ${(p) => p.$h}px;
  margin-left: ${(p) => p.$ml}px;
  margin-bottom: ${(p) => p.$mb ?? 0}px;
  display: flex;
  align-items: center;
  justify-content: center;
  border: 1px solid ${(p) => p.$bc ?? c.border};
  border-radius: 20px;
`;

const Button = styled.span<{ $w: number; $ml?: number; $h?: number; $mt?: number }>`
  flex: none;
  width: ${(p) => p.$w}px;
  height: ${(p) => p.$h ?? 28}px;
  margin-left: ${(p) => p.$ml ?? 0}px;
  margin-top: ${(p) => p.$mt ?? 0}px;
  display: flex;
  align-items: center;
  background: ${c.soft};
  border: 1px solid #363b42;
  border-radius: 6px;
`;

const ButtonSplit = styled.span`
  align-self: stretch;
  width: 33px;
  margin-left: auto;
  display: grid;
  place-items: center;
  border-left: 1px solid #363b42;
`;

const Count = styled.span<{ $ml: number; $dim?: boolean; $tone?: string }>`
  flex: none;
  width: 20px;
  height: 20px;
  margin-left: ${(p) => p.$ml}px;
  display: grid;
  place-items: center;
  border-radius: 10px;
  background: ${(p) => (p.$dim ? "#262b32" : "#31373e")};
  font-size: 11.5px;
  font-weight: 600;
  line-height: 1;
  color: ${(p) => (p.$dim ? "#484f58" : p.$tone ?? c.text)};
`;

const RepoNav = styled.nav`
  height: 48px;
  display: flex;
  padding-left: 32px;
  border-bottom: 1px solid #21262d;
`;

const NavItem = styled.div<{ $w: number; $on?: boolean }>`
  flex: none;
  width: ${(p) => p.$w}px;
  height: 48px;
  padding-left: 8px;
  display: flex;
  align-items: center;
  ${(p) => p.$on && css`background: linear-gradient(#dd7963, #dd7963) 0 100% / 120.5px 2px no-repeat;`}
`;

const Container = styled.main`
  width: 1216px;
  margin-left: 181.4px;
`;

const TitleRow = styled.div`
  height: 45px;
  margin-top: 21px;
  display: flex;
  align-items: center;
`;

const StateRow = styled.div`
  height: 32px;
  margin-top: 5px;
  display: flex;
  align-items: center;
`;

const MergedState = styled.span`
  width: 95px;
  height: 32px;
  display: flex;
  align-items: center;
  border-radius: 16px;
  background: ${c.purple};
`;

const Branch = styled.span<{ $w: number; $ml: number }>`
  flex: none;
  width: ${(p) => p.$w}px;
  height: 21px;
  margin-left: ${(p) => p.$ml}px;
  margin-top: 2px;
  display: flex;
  align-items: center;
  justify-content: center;
  border-radius: 6px;
  background: #13243c;
`;

const PrTabs = styled.div`
  height: 40px;
  margin-top: 25px;
  display: flex;
  align-items: stretch;
`;

const ActiveTab = styled.div`
  width: 167px;
  display: flex;
  align-items: center;
  padding: 2px 0 0 15px;
  border: 1px solid ${c.border};
  border-bottom: 0;
  border-radius: 6px 6px 0 0;
`;

const TabsRest = styled.div`
  flex: 1;
  display: flex;
  align-items: center;
  padding-top: 3px;
  border-bottom: 1px solid ${c.border};
`;

const DiffBlocks = styled.span`
  display: flex;
  gap: 1px;
  margin-left: 4px;
  margin-bottom: 2px;
  i { width: 8px; height: 8px; background: #31373e; border: 1px solid #41474e; }
  i:first-child { background: #3fb950; border-color: #3fb950; }
`;

const Columns = styled.div`
  display: flex;
  justify-content: space-between;
  margin-top: 16px;
`;

const Thread = styled.div`
  width: 896px;
`;

const Row = styled.div`
  display: flex;
  gap: 16px;
`;

const Bubble = styled.div<{ $bc: string; $fill: string; $h: number }>`
  position: relative;
  width: 840px;
  height: ${(p) => p.$h}px;
  border: 1px solid ${(p) => p.$bc};
  border-radius: 6px;
  &::before {
    content: "";
    position: absolute;
    left: -6.5px;
    top: 13.5px;
    width: 11px;
    height: 11px;
    transform: rotate(45deg);
    border: 1px solid ${(p) => p.$bc};
    border-top: 0;
    border-right: 0;
    background: ${(p) => p.$fill};
    clip-path: polygon(0 0, 100% 100%, 0 100%);
  }
`;

const CommentHead = styled.div`
  height: 37px;
  display: flex;
  align-items: center;
  padding-left: 16px;
  background: #13233a;
  border-bottom: 1px solid #1d3658;
  border-radius: 5px 5px 0 0;
`;

const CommentBody = styled.div`
  height: 53px;
  display: flex;
  align-items: center;
  padding-left: 16px;
`;

const Timeline = styled.div`
  height: 115px;
  background: linear-gradient(#21262d, #21262d) 71.5px 0 / 2px 100% no-repeat;
`;

const CommitRow = styled.div`
  height: 37px;
  display: flex;
  align-items: center;
  padding-left: 64px;
`;

const MergeRow = styled.div`
  height: 63px;
  margin-top: 15px;
  display: flex;
  align-items: center;
  padding-left: 56px;
`;

const RailGap = styled.span`
  background: ${c.page};
`;

const MergeDot = styled.span`
  flex: none;
  width: 33px;
  height: 33px;
  display: grid;
  place-items: center;
  border: 2px solid ${c.page};
  border-radius: 50%;
  background: ${c.purple};
`;

const ThickRule = styled.div`
  height: 4px;
  margin-bottom: 22px;
  background: #2f353c;
`;

const MergeSquare = styled.span`
  flex: none;
  width: 40px;
  height: 40px;
  display: grid;
  place-items: center;
  border-radius: 6px;
  background: ${c.purple};
`;

const MergeBox = styled.div`
  display: flex;
  justify-content: space-between;
  padding: 16px 16px 0;
`;

const MergeText = styled.div`
  display: flex;
  flex-direction: column;
`;

const MergeLine = styled.div<{ $h: number }>`
  height: ${(p) => p.$h}px;
  display: flex;
  align-items: center;
`;

const FormHead = styled.div`
  height: 47px;
  display: flex;
  align-items: flex-end;
  padding-left: 8px;
  background: linear-gradient(${c.border}, ${c.border}) 0 100% / 100% 1px no-repeat, ${c.header};
  border-radius: 5px 5px 0 0;
`;

const WriteTab = styled.div`
  width: 67px;
  height: 39px;
  display: grid;
  place-items: center;
  background: ${c.page};
  border: 1px solid ${c.border};
  border-bottom: 0;
  border-radius: 6px 6px 0 0;
`;

const FormTools = styled.div`
  height: 38px;
  display: flex;
  align-items: center;
  flex: 1;
  padding-bottom: 1px;
  color: ${c.muted};
`;

const ToolIcons = styled.div`
  display: flex;
  gap: 13px;
  margin-left: 339.5px;
  margin-bottom: 3px;
`;

const HeavyIcon = styled.span`
  svg { stroke: currentColor; stroke-width: 0.6px; }
`;

const Textarea = styled.div`
  height: 100px;
  margin: 8px 8px 0;
  background: #010409;
  border: 1px solid ${c.border};
  border-radius: 6px;
`;

const FormSpacer = styled.div`
  height: 15.5px;
`;

const Aside = styled.aside`
  width: 296px;
`;

const AsideSection = styled.section<{ $h: number }>`
  height: ${(p) => p.$h}px;
  padding-top: 12px;
  border-bottom: 1px solid #21262d;
`;

const AsideRow = styled.div<{ $lift?: number }>`
  height: 26px;
  display: flex;
  align-items: center;
  & > svg {
    margin-left: auto;
    margin-top: 1px;
    margin-bottom: ${(p) => p.$lift ?? 0}px;
  }
`;

function CommentForm() {
  return (
    <Row>
      <Avatar size={40} />
      <Bubble $bc={c.border} $fill={c.header} $h={200}>
        <FormHead>
          <WriteTab><Fit w={34} drop={0.5}>Write</Fit></WriteTab>
          <FormTools>
            <Fit ml={20} w={48} color={c.muted}>Preview</Fit>
            <ToolIcons>
              <HeavyIcon><GoHeading size={16} /></HeavyIcon>
              <HeavyIcon><GoBold size={16} /></HeavyIcon>
              <HeavyIcon><GoItalic size={16} /></HeavyIcon>
              <Oct n="quote" />
              <Oct n="code" />
              <Oct n="link" />
              <Oct n="ul" />
              <HeavyIcon><GoListOrdered size={16} /></HeavyIcon>
              <Oct n="tasks" />
              <HeavyIcon><GoMention size={16} /></HeavyIcon>
              <Oct n="crossref" ml={2} />
              <Oct n="reply" ml={3} />
            </ToolIcons>
          </FormTools>
        </FormHead>
        <Textarea />
      </Bubble>
    </Row>
  );
}

const asideItems = [
  { title: "Labels", tw: 34, body: "None yet", bw: 48.5, h: 76.5 },
  { title: "Projects", tw: 43, body: "None yet", bw: 48.5, h: 77 },
  { title: "Milestone", tw: 53.5, body: "No milestone", bw: 71, h: 77 },
];

function Sidebar() {
  return (
    <Aside>
      <AsideSection $h={111}>
        <AsideRow><Fit w={54} size={11.6} weight={600} color={c.muted}>Reviewers</Fit><Oct n="gear" /></AsideRow>
        <AsideRow><Fit w={58} size={11.6} drop={0.5}>No reviews</Fit></AsideRow>
        <AsideRow>
          <Fit w={86} size={11.6}>Still in progress?</Fit>
          <Fit w={114} size={11.6} ml={4} color={c.muted}>Learn about draft PRs</Fit>
          <Oct n="info" />
        </AsideRow>
      </AsideSection>
      <AsideSection $h={76.5}>
        <AsideRow><Fit w={53.5} size={11.6} weight={600} color={c.muted} drop={0.5}>Assignees</Fit><Oct n="gear" /></AsideRow>
        <AsideRow>
          <Fit w={39.5} size={11.6} drop={0.5}>No one</Fit>
          <Fit w={90} size={11.6} color={c.muted} drop={0.5}>—assign yourself</Fit>
        </AsideRow>
      </AsideSection>
      {asideItems.map((s) => (
        <AsideSection $h={s.h} key={s.title}>
          <AsideRow $lift={3}><Fit w={s.tw} size={11.6} weight={600} color={c.muted} drop={0.5}>{s.title}</Fit><Oct n="gear" /></AsideRow>
          <AsideRow><Fit w={s.bw} size={11.6} drop={0.5}>{s.body}</Fit></AsideRow>
        </AsideSection>
      ))}
    </Aside>
  );
}

const navItems = [
  { n: "code", t: "Code", iw: 33, w: 80.5 },
  { n: "issue", t: "Issues", iw: 37.5, w: 86.5 },
  { n: "pull", t: "Pull requests", iw: 81.5, w: 128.5, on: true },
  { n: "play", t: "Actions", iw: 46.5, w: 95 },
  { n: "table", t: "Projects", iw: 49.5, w: 98.5 },
  { n: "book", t: "Wiki", iw: 27, w: 76.5 },
  { n: "shield", t: "Security", iw: 50, w: 98.5 },
  { n: "graph", t: "Insights", iw: 48.5, w: 97.5 },
  { n: "gear", t: "Settings", iw: 50.5, w: 90 },
];

function RepoHead() {
  return (
    <>
      <SiteHeader>
        <Oct n="mark" size={32} color="#f0f6fc" />
        <SearchBox>
          <Fit w={121} color="#b8bec5">Search or jump to...</Fit>
          <SlashKey>/</SlashKey>
        </SearchBox>
        <Fit ml={16} w={81} weight={600} color="#f0f6fc">Pull requests</Fit>
        <Fit ml={16.5} w={37.5} weight={600} color="#f0f6fc">Issues</Fit>
        <Fit ml={16} w={75} weight={600} color="#f0f6fc">Codespaces</Fit>
        <Fit ml={16} w={78.5} weight={600} color="#f0f6fc">Marketplace</Fit>
        <Fit ml={15.5} w={47.5} weight={600} color="#f0f6fc">Explore</Fit>
        <Oct n="bell" ml={690.5} color="#f0f6fc" />
        <Oct n="plus" ml={16} color="#f0f6fc" />
        <Caret $ml={3.5} $mt={2} $s={3.5} $color="#f0f6fc" />
        <HeaderAvatar><Avatar size={20} /></HeaderAvatar>
        <Caret $ml={4} $s={3.5} $color="#f0f6fc" />
      </SiteHeader>
      <RepoTop>
        <Oct n="repo" />
        <Fit ml={8} w={98} size={19.3} color={c.link} drop={0.5}>atikasetiani</Fit>
        <Fit ml={5} w={8} size={19.3} color={c.muted} drop={0.5}>/</Fit>
        <Fit ml={3.5} w={192.5} size={19.3} weight={600} color={c.link} drop={0.5}>qe_atika-dewi-setiani</Fit>
        <Pill $w={49} $h={20} $ml={8} $mb={2}><Fit w={33} size={11.6} weight={600} color={c.muted} drop={0}>Public</Fit></Pill>
        <Button $w={67} $ml={636}>
          <Oct n="pin" ml={12} flip size={15} />
          <Fit ml={9} w={17} size={11.6} weight={600}>Pin</Fit>
        </Button>
        <Button $w={132} $ml={7.5}>
          <Oct n="eye" ml={11} />
          <Fit ml={4} w={48} size={11.6} weight={600}>Unwatch</Fit>
          <Count $ml={5}>1</Count>
          <Caret $ml={8} $mt={3} $s={3.5} />
        </Button>
        <Button $w={132} $ml={8}>
          <Oct n="fork" ml={11} color="#484f58" />
          <Fit ml={8} w={24} size={11.6} color="#484f58" weight={600}>Fork</Fit>
          <Count $ml={6} $dim>0</Count>
          <ButtonSplit><Caret $color={c.muted} /></ButtonSplit>
        </Button>
        <Button $w={133} $ml={12}>
          <Oct n="star" ml={12} />
          <Fit ml={11} w={21.5} size={11.6} weight={600}>Star</Fit>
          <Count $ml={5}>0</Count>
          <ButtonSplit><Caret $color={c.muted} /></ButtonSplit>
        </Button>
      </RepoTop>
      <RepoNav>
        {navItems.map((i) => (
          <NavItem key={i.t} $w={i.w} $on={i.on}>
            <Oct n={i.n} />
            <Fit ml={8} w={i.iw} weight={i.on ? 600 : 400}>{i.t}</Fit>
          </NavItem>
        ))}
      </RepoNav>
    </>
  );
}

function PullRequest() {
  return (
    <Container>
      <TitleRow>
        <Fit w={293} size={30.8}>Menambahkan Prodi</Fit>
        <Fit ml={9.5} w={31} size={30.8} weight={300} color={c.muted}>#1</Fit>
        <Button $w={47} $ml={743.5}><Fit ml={12} w={21.5} size={11.6} weight={600}>Edit</Fit></Button>
        <Button $w={88} $ml={4}>
          <Oct n="code" ml={11} />
          <Fit ml={8} w={28} size={11.6} weight={600}>Code</Fit>
          <Caret $ml={4} $mt={2} $s={3.5} />
        </Button>
      </TitleRow>
      <StateRow>
        <MergedState>
          <Oct n="merge" ml={13} color="#fff" size={15} />
          <Fit ml={4.5} w={50} weight={600} color="#fff" drop={1.5}>Merged</Fit>
        </MergedState>
        <Fit ml={8} w={72} weight={600} color={c.muted} drop={0.5}>atikasetiani</Fit>
        <Fit ml={4} w={138.5} color={c.muted} drop={0.5}>merged 1 commit into</Fit>
        <Branch $w={34} $ml={3.5}><Fit mono w={26.5} size={11} color={c.link}>main</Fit></Branch>
        <Fit ml={4} w={29} color={c.muted} drop={0.5}>from</Fit>
        <Branch $w={67} $ml={4.5}><Fit mono w={59} size={11} color={c.link}>Identitas</Fit></Branch>
        <Oct n="copy" ml={4} />
        <Fit ml={3.5} w={27} color={c.muted} drop={0.5}>now</Fit>
      </StateRow>
      <PrTabs>
        <ActiveTab>
          <Oct n="discussion" color={c.text} />
          <Fit ml={8} w={81} color={c.text} drop={0.5}>Conversation</Fit>
          <Count $ml={8}>0</Count>
        </ActiveTab>
        <TabsRest>
          <Oct n="commit" ml={16} />
          <Fit ml={8} w={55} color={c.muted}>Commits</Fit>
          <Count $ml={8} $tone={c.muted}>1</Count>
          <Oct n="checklist" ml={33} />
          <Fit ml={8} w={43.5} color={c.muted}>Checks</Fit>
          <Count $ml={8} $tone={c.muted}>0</Count>
          <Oct n="filediff" ml={33} />
          <Fit ml={8.5} w={84} color={c.muted}>Files changed</Fit>
          <Count $ml={8} $tone={c.muted}>1</Count>
          <Fit ml={549.5} w={12} size={11.6} weight={600} color="#3fb950" drop={0}>+1</Fit>
          <Fit ml={4} w={14} size={11.6} weight={600} color="#f85149" drop={0}>−0</Fit>
          <DiffBlocks><i /><i /><i /><i /><i /></DiffBlocks>
        </TabsRest>
      </PrTabs>
      <Columns>
        <Thread>
          <Row>
            <Avatar size={40} />
            <Bubble $bc="#1d3658" $fill="#13233a" $h={92}>
              <CommentHead>
                <Fit w={71.5} weight={600}>atikasetiani</Fit>
                <Fit ml={4} w={167} color={c.muted}>commented 3 minutes ago</Fit>
                <Pill $w={52} $h={19} $ml={455.5} $bc="#1f4173"><Fit w={36} size={11.6} weight={600} color={c.muted} drop={0.5}>Owner</Fit></Pill>
                <Smiley ml={11.5} />
                <Oct n="kebab" ml={8} />
              </CommentHead>
              <CommentBody><Fit w={146} italic color={c.muted} drop={0}>No description provided.</Fit></CommentBody>
            </Bubble>
          </Row>
          <Timeline>
            <CommitRow>
              <RailGap><Oct n="commit" /></RailGap>
              <Avatar size={20} ml={17} lift={1.5} />
              <Fit mono ml={6} w={112} size={11} color={c.muted} drop={1.5}>Menambahkan Prodi</Fit>
              <Pill $w={58} $h={20} $ml={529.5} $mb={-2}><Fit w={42} size={11.6} weight={600} color="#3fb950" drop={0.5}>Verified</Fit></Pill>
              <Fit mono ml={27.5} w={46} size={11} color={c.muted} drop={1.5}>daaa082</Fit>
            </CommitRow>
            <MergeRow>
              <MergeDot><Oct n="merge" color="#fff" size={15} /></MergeDot>
              <Avatar size={20} ml={8} />
              <Fit ml={4.5} w={72} weight={600} drop={-0}>atikasetiani</Fit>
              <Fit ml={4} w={98.5} color={c.muted} drop={0}>merged commit</Fit>
              <Fit mono ml={4} w={46} size={11} weight={700} drop={0.5}>3ac040d</Fit>
              <Fit ml={3.5} w={24} color={c.muted} drop={0}>into</Fit>
              <Branch $w={34} $ml={4}><Fit mono w={26.5} size={11} color={c.muted} drop={0.5}>main</Fit></Branch>
              <Fit ml={4} w={27} color={c.muted} drop={0}>now</Fit>
              <Button $w={61} $ml={392} $mt={3}><Fit ml={12} w={35.5} size={11.6} weight={600} color={c.link}>Revert</Fit></Button>
            </MergeRow>
          </Timeline>
          <ThickRule />
          <Row>
            <MergeSquare><Oct n="merge" size={24} color="#fff" /></MergeSquare>
            <Bubble $bc="#6e47b5" $fill={c.page} $h={78}>
              <MergeBox>
                <MergeText>
                  <MergeLine $h={23}><Fit w={318} size={15.4} weight={600}>Pull request successfully merged and closed</Fit></MergeLine>
                  <MergeLine $h={26}>
                    <Fit w={112} color={c.muted}>You’re all set—the</Fit>
                    <Branch $w={67} $ml={4}><Fit mono w={59} size={11} color={c.muted} drop={0.5}>Identitas</Fit></Branch>
                    <Fit ml={4} w={179.5} color={c.muted}>branch can be safely deleted.</Fit>
                  </MergeLine>
                </MergeText>
                <Button $w={123} $h={32}><Fit ml={16} w={89} weight={600} drop={1.5}>Delete branch</Fit></Button>
              </MergeBox>
            </Bubble>
          </Row>
          <FormSpacer />
          <CommentForm />
        </Thread>
        <Sidebar />
      </Columns>
    </Container>
  );
}

/* ---------- taskbar ---------- */

const Taskbar = styled.footer`
  flex: none;
  height: 60px;
  display: flex;
  align-items: center;
  background: linear-gradient(90deg, #22231f 0%, #202020 45%, #2a2a2b 75%, #232324 100%);
`;

const Weather = styled.div`
  display: flex;
  align-items: center;
  width: 289.5px;
  padding-left: 24px;
`;

const WeatherIcon = styled.svg`
  margin-top: 3px;
`;

const TwoLines = styled.div`
  display: flex;
  flex-direction: column;
  margin-left: 8px;
`;

const StartSlot = styled.div`
  width: 72px;
  padding-left: 24px;
`;

const SearchPill = styled.div`
  width: 124px;
  height: 40px;
  margin-right: 4px;
  display: flex;
  align-items: center;
  padding-left: 27.5px;
  border-radius: 20px;
  background: #303030;
`;

const AppSlot = styled.div<{ $active?: boolean; $mark?: boolean }>`
  flex: none;
  position: relative;
  width: 50px;
  height: 50px;
  margin: 0 2.5px;
  display: grid;
  place-items: center;
  border-radius: 5px;
  ${(p) => p.$active && css`background: #373737;`}
  &::after {
    content: "";
    position: absolute;
    bottom: 0;
    left: 50%;
    transform: translateX(-50%);
    width: ${(p) => (p.$active ? 20 : 7)}px;
    height: 4px;
    border-radius: 2px;
    background: ${(p) => (p.$active ? "#60b8e8" : p.$mark ? "#9a9a9a" : "transparent")};
  }
`;

const Overlay = styled.span`
  position: absolute;
  top: 4px;
  right: 3px;
  width: 21px;
  height: 21px;
  display: grid;
  place-items: center;
  overflow: hidden;
  border-radius: 50%;
`;

const RedBadge = styled(Overlay)`
  background: #f01018;
  color: #fff;
  font-size: 15px;
  line-height: 1;
`;

const Tray = styled.div`
  display: flex;
  align-items: center;
  flex: 1;
  padding-left: 22px;
`;

const ClockBlock = styled.div`
  display: flex;
  flex-direction: column;
  align-items: flex-end;
  margin-left: 19px;
`;

const CountBadge = styled.span`
  width: 25px;
  height: 25px;
  margin-left: 6px;
  display: grid;
  place-items: center;
  border-radius: 50%;
  background: #55bdf3;
  color: #10222e;
  font-size: 13px;
  letter-spacing: -0.5px;
`;

const WordTile = styled.span`
  width: 30px;
  height: 28px;
  display: flex;
  align-items: center;
  border-radius: 2px;
  background: linear-gradient(#41a5ee 0 25%, #2b7cd3 25% 50%, #185abd 50% 75%, #103f91 75%) 7px 0 / 23px 28px no-repeat;
  span {
    width: 17px;
    height: 16px;
    display: grid;
    place-items: center;
    border-radius: 1px;
    background: #1650ae;
    color: #fff;
    font-size: 12px;
    font-weight: 700;
    line-height: 1;
  }
`;

function ChromeLogo() {
  return (
    <svg width="32" height="32" viewBox="0 0 32 32">
      <circle cx="16" cy="16" r="15.5" fill="#fbc116" />
      <path d="M16 16L2.600 8.200A15.500 15.500 0 0 1 29.400 8.200H16z" fill="#e33b2e" />
      <path d="M2.600 8.200A15.500 15.500 0 0 0 16 31.500l6.800-11.800L16 16 9.300 19.800z" fill="#2da94f" />
      <circle cx="16" cy="16" r="8" fill="#fff" />
      <circle cx="16" cy="16" r="6.2" fill="#2f7de9" />
    </svg>
  );
}

function FaceBadge() {
  return (
    <svg width="21" height="24" viewBox="0 0 21 24">
      <ellipse cx="10.5" cy="12" rx="10.5" ry="12" fill="#4d3d38" />
      <ellipse cx="9.5" cy="11.5" rx="4.500" ry="6" fill="#b88a70" />
      <path d="M3 24c1-5 4-7 7-7s8 2 8 7z" fill="#7b5a4a" />
    </svg>
  );
}

function Apps() {
  return (
    <>
      <AppSlot>
        <svg width="32" height="30" viewBox="0 0 32 30">
          <defs><linearGradient id="tv" x2="1" y2="1"><stop stopColor="#fff" /><stop offset="1" stopColor="#cfcfcf" /></linearGradient></defs>
          <rect x="1" y="9" width="22" height="19" rx="1" fill="#6f6f6f" />
          <rect x="9" y="1" width="22" height="19" rx="1" fill="url(#tv)" />
          <rect x="9" y="9" width="14" height="11" fill="#b9b9b9" />
        </svg>
      </AppSlot>
      <AppSlot>
        <svg width="30" height="30" viewBox="0 0 30 30">
          <defs><linearGradient id="chat" y2="1" x2="0"><stop stopColor="#8e7bd0" /><stop offset="1" stopColor="#5b50c4" /></linearGradient></defs>
          <path d="M15 1a14 14 0 1 1-7 26.200L1.500 29l1.600-6.500A14 14 0 0 1 15 1z" fill="url(#chat)" />
          <rect x="7" y="10" width="11.5" height="11" rx="2" fill="#fff" />
          <path d="M20 14l4-3v9l-4-3z" fill="#fff" />
        </svg>
      </AppSlot>
      <AppSlot>
        <svg width="32" height="30" viewBox="0 0 32 30">
          <path d="M1 11L16 1l15 10v4H1z" fill="#0a5cab" />
          <path d="M3.500 9.800h25L16 20z" fill="#f2f7fb" />
          <path d="M1 10.500L16 21.500 31 10.500V28a1 1 0 0 1-1 1H2a1 1 0 0 1-1-1z" fill="#28b5f0" />
          <path d="M16 21.500l5-3.600L31 28.500l-.5.4z" fill="#1282d6" />
        </svg>
      </AppSlot>
      <AppSlot>
        <svg width="30" height="30" viewBox="0 0 30 30">
          <circle cx="15" cy="15" r="14" fill="#fcd34a" />
          <path d="M15 1C6 1 1 8 1 15c0 8 6 14 14 14-5-3-8-7-8-13 0-5 3-9 8-15z" fill="#f0871c" />
          <path d="M10 2.500C20-1.500 30 6 29 16c-.3 2-.8 4-2 5.500L12 8z" fill="#7c4bd8" />
          <path d="M15 6l8 2.500v6c0 5-3 8.500-8 10-5-1.500-8-5-8-10v-6z" fill="#fff" />
          <path d="M15 10a2.600 2.600 0 0 1 1.400 4.700L17 19h-4l.6-4.300A2.600 2.600 0 0 1 15 10z" fill="#2c2d33" />
        </svg>
      </AppSlot>
      <AppSlot>
        <svg width="30" height="30" viewBox="0 0 30 30">
          <defs><linearGradient id="ff" x1=".9" y1="0" x2=".2" y2="1"><stop stopColor="#ffe040" /><stop offset=".45" stopColor="#ff7b24" /><stop offset="1" stopColor="#f5216d" /></linearGradient></defs>
          <path d="M19 0c1 2 5 5 6 8l1-1c2 3 3 6 2.800 9.500C28 24 22.500 29.500 15 29.500S1 24 1 16c0-4 1-7 3-9v3l2-4c1 2 3 2.500 5 2.500C14 8.500 18 4 19 0z" fill="url(#ff)" />
          <circle cx="14.5" cy="17" r="6" fill="#7a3fd0" />
          <path d="M7 13c3-2 6 0 8 1-1 2-4 2-4 4 1 3 6 3 8 0-1 6-10 6-12 1z" fill="#ff9326" />
        </svg>
      </AppSlot>
      <AppSlot>
        <svg width="30" height="30" viewBox="0 0 30 30">
          <ellipse cx="15" cy="15" rx="14.5" ry="14.5" fill="#e3152a" />
          <ellipse cx="15" cy="15" rx="6.5" ry="10.5" fill="#232323" />
          <path d="M20 3.500c6 4 6 19 0 23 4-2 9.500-6 9.500-11.500S24 5 20 3.500z" fill="#b3091b" />
        </svg>
      </AppSlot>
      <AppSlot>
        <svg width="24" height="28" viewBox="0 0 24 28">
          <path d="M1 .5h15L23 7v20.500H1z" fill="#fafafa" />
          <path d="M16 .5V7h7z" fill="#b9b9b9" />
        </svg>
      </AppSlot>
      <AppSlot $mark>
        <svg width="32" height="32" viewBox="0 0 32 32">
          <defs><linearGradient id="edge" x2="1"><stop stopColor="#2098e0" /><stop offset="1" stopColor="#63d95c" /></linearGradient></defs>
          <path d="M1 16C1 7 8 1 16 1s15 6 15 13c0 5-4 7-8 7s-5-1-4-3c2-4 0-8-5-8C7 10 1 13 1 16z" fill="url(#edge)" />
          <path d="M1 16c1-4 6-6 11-6-4 2-6 7-4 12 2 6 9 9 16 4-2 4-6 5.500-9 5.500C7 31.500 1 24 1 16z" fill="#1467b8" />
          <circle cx="7.5" cy="25" r="6.5" fill="#5c5a5c" />
          <circle cx="7.5" cy="23.5" r="2.600" fill="#c59a86" />
        </svg>
      </AppSlot>
      <AppSlot $mark>
        <svg width="32" height="30" viewBox="0 0 32 30">
          <path d="M1 3a1.500 1.500 0 0 1 1.500-1.500H11L14 5h15.500A1.500 1.500 0 0 1 31 6.500V12H1z" fill="#d99a14" />
          <rect x="1" y="6.5" width="30" height="22" rx="1.5" fill="#fccf4f" />
          <path d="M7 28.500V22a2.500 2.500 0 0 1 2.500-2.500h13A2.500 2.500 0 0 1 25 22v6.500z" fill="#1781d3" />
          <path d="M11 24h10" stroke="#0d4f94" strokeWidth="2" />
        </svg>
      </AppSlot>
      <AppSlot $active>
        <ChromeLogo />
        <Overlay><Portrait size={21} /></Overlay>
      </AppSlot>
      <AppSlot $mark>
        <svg width="30" height="30" viewBox="0 0 30 30">
          <path d="M15 1a14 14 0 1 1-6.600 26.300L1 29.500l2.300-7A14 14 0 0 1 15 1z" fill="#fff" />
          <path d="M15 3.300a11.700 11.700 0 1 1-6 21.700L4.300 26.300l1.400-4.400A11.700 11.700 0 0 1 15 3.300z" fill="#2bb741" />
          <path d="M10.500 8.500c1-.5 1.800 0 2.200 1l.8 2c.2.600-1 1.500-1 2 1 2 2.500 3.300 4.500 4 .6 0 1.300-1.500 2-1.300l2.200 1c.8.500.3 2.300-.7 3-1.200.8-2.800.8-4.500 0-3.500-1.500-6-4-7.300-7-.7-2 .2-4 1.800-4.700z" fill="#fff" />
        </svg>
        <RedBadge>3</RedBadge>
      </AppSlot>
      <AppSlot $mark>
        <WordTile>
          <span>W</span>
        </WordTile>
      </AppSlot>
      <AppSlot $mark>
        <svg width="32" height="30" viewBox="0 0 32 30">
          <path d="M6 1l22-1-3 19-19 2z" fill="#d7dbe2" />
          <path d="M8 3l18-1-3 15-15 2z" fill="#1b2fb2" />
          <ellipse cx="18" cy="26" rx="9" ry="4" fill="#d3d6dc" />
          <path d="M13 20h8l1 6H12z" fill="#aab0b9" />
          <rect x="1" y="7" width="23" height="9" fill="#3f9be0" />
          <path d="M3 9.500h19M3 13h19" stroke="#e5f3ff" strokeWidth="1.2" strokeDasharray="2 1" />
        </svg>
      </AppSlot>
      <AppSlot $mark>
        <ChromeLogo />
        <Overlay><FaceBadge /></Overlay>
      </AppSlot>
    </>
  );
}

function Taskband() {
  return (
    <Taskbar>
      <Weather>
        <WeatherIcon width="32" height="28" viewBox="0 0 32 28">
          <defs><linearGradient id="cloud" x2="0" y2="1"><stop stopColor="#dce9fb" /><stop offset="1" stopColor="#8fb4ee" /></linearGradient></defs>
          <circle cx="22" cy="10.5" r="8" fill="#f39a1e" />
          <path d="M8 27a7 7 0 0 1-1.500-13.500A9 9 0 0 1 23 14a6.600 6.600 0 0 1 1.500 13z" fill="url(#cloud)" />
        </WeatherIcon>
        <TwoLines>
          <Fit w={32} size={14.4} color="#fff">27°C</Fit>
          <Fit w={57} size={14.4} color="#c3c3c3" drop={0.5}>Berawan</Fit>
        </TwoLines>
      </Weather>
      <StartSlot>
        <svg width="30" height="30" viewBox="0 0 30 30">
          <defs><linearGradient id="win" x2="1" y2="1"><stop stopColor="#7fe3fb" /><stop offset="1" stopColor="#1a8df0" /></linearGradient></defs>
          <path fill="url(#win)" d="M0 1h14.300v14H0zM15.700 1H30v14H15.700zM0 16.400h14.300v14H0zM15.700 16.400H30v14H15.700z" />
        </svg>
      </StartSlot>
      <SearchPill>
        <svg width="18" height="18" viewBox="0 0 18 18" fill="none" stroke="#fff" strokeWidth="2"><circle cx="10.5" cy="7.5" r="6.3" /><path d="M6 12L.8 17.200" /></svg>
        <Fit ml={5} w={45.5} size={14.4} color="#fff">Search</Fit>
      </SearchPill>
      <Apps />
      <Tray>
        <svg width="16" height="10" viewBox="0 0 16 10" fill="none" stroke="#e8e8e8" strokeWidth="1.3"><path d="M1 8.500l7-7 7 7" /></svg>
        <Fit ml={20} w={29.5} size={14.2} color="#fff" drop={0.5}>ENG</Fit>
        <IconSvg $ml={22} $color="none" width="22" height="18" viewBox="0 0 22 18" stroke="#fff" strokeWidth="1.6" strokeLinecap="round">
          <path d="M1.500 6.500a13.500 13.500 0 0 1 19 0M4.700 9.700a9 9 0 0 1 12.600 0M7.700 12.700a4.700 4.700 0 0 1 6.600 0" />
          <circle cx="11" cy="15.5" r="1.2" fill="#fff" />
        </IconSvg>
        <IconSvg $ml={8} $color="none" width="20" height="18" viewBox="0 0 20 18" stroke="#fff" strokeWidth="1.3" strokeLinejoin="round">
          <path d="M1 6.500h3l4.500-4v13L4 11.500H1z" />
          <path d="M11.500 6a4.500 4.500 0 0 1 0 6M14 4a7.500 7.500 0 0 1 0 10" />
          <path d="M16.500 2a10 10 0 0 1 0 14" stroke="#777" />
        </IconSvg>
        <IconSvg $ml={10} $color="none" width="21" height="14" viewBox="0 0 21 14" stroke="#fff" strokeWidth="1.5">
          <rect x="1" y="1" width="16" height="12" rx="2.5" />
          <rect x="3.5" y="3.5" width="4" height="7" fill="#fff" stroke="none" />
          <path d="M19.500 5v4" strokeWidth="2" />
        </IconSvg>
        <ClockBlock>
          <Fit w={34.5} size={14.2} color="#fff" drop={0.5}>10.03</Fit>
          <Fit w={78} size={14.2} color="#fff" drop={0.5}>24/02/2023</Fit>
        </ClockBlock>
        <CountBadge>22</CountBadge>
      </Tray>
    </Taskbar>
  );
}

export default function App() {
  return (
    <Screen>
      <GlobalStyle />
      <BrowserChrome />
      <Viewport>
        <Page>
          <RepoHead />
          <PullRequest />
        </Page>
        <Scrollbar>
          <UpArrow />
          <Thumb />
          <DownArrow />
        </Scrollbar>
      </Viewport>
      <Taskband />
    </Screen>
  );
}
